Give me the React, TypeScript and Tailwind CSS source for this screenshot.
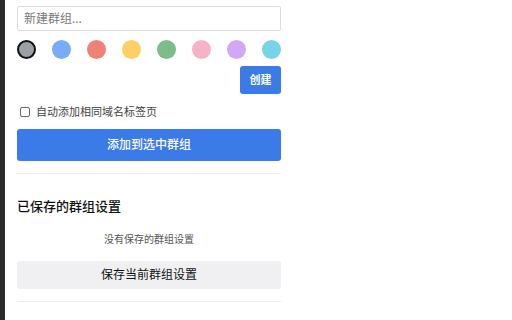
const colors = [
  "#9aa0a6",
  "#7baaf7",
  "#ee8277",
  "#fdd066",
  "#7dbd8c",
  "#f7b2c8",
  "#d2a8f5",
  "#78d3e6",
];

const App = () => {
  return (
    <div
      className="flex h-[320px] w-[512px] overflow-hidden bg-white"
      style={{ fontFamily: '"Noto Sans", "Noto Sans CJK SC", sans-serif' }}
    >
      <div className="w-[5px] shrink-0 bg-[#2b2b2b]" />
      <div className="w-[264px] ml-[12px] pt-[5px]">
        <input
          className="h-[25px] w-full rounded-[2px] border border-[#dcdcdc] px-[6px] text-[12px] text-gray-800 placeholder:text-[#777] outline-none"
          placeholder="新建群组..."
        />
        <div className="mt-[9px] flex justify-between">
          {colors.map((c, i) => (
            <span
              key={c}
              className={
                i === 0
                  ? "h-[19px] w-[19px] rounded-full border-2 border-[#111]"
                  : "h-[19px] w-[19px] rounded-full"
              }
              style={{ backgroundColor: c }}
            />
          ))}
        </div>
        <div className="mt-[7px] flex justify-end">
          <button className="h-[28px] w-[41px] rounded-[3px] bg-[#3a7be8] text-[11px] font-bold text-white">
            创建
          </button>
        </div>
        <label className="mt-[10px] flex items-center pl-[3px] text-[11px] text-[#444]">
          <span className="mr-[6px] h-[10px] w-[10px] rounded-[2px] border border-[#666]" />
          自动添加相同域名标签页
        </label>
        <button className="mt-[8px] h-[32px] w-full rounded-[3px] bg-[#3a7be8] text-[12px] font-medium text-white">
          添加到选中群组
        </button>
        <div className="mt-[12px] h-px bg-[#eeeeee]" />
        <h2 className="mt-[23px] text-[13px] font-medium text-[#111]">已保存的群组设置</h2>
        <p className="mt-[16px] text-center text-[10px] text-[#555]">没有保存的群组设置</p>
        <button className="mt-[14px] h-[28px] w-full rounded-[3px] bg-[#f0f0f2] text-[12px] text-[#111]">
          保存当前群组设置
        </button>
        <div className="mt-[12px] h-px bg-[#eeeeee]" />
      </div>
    </div>
  );
};

export default App;
